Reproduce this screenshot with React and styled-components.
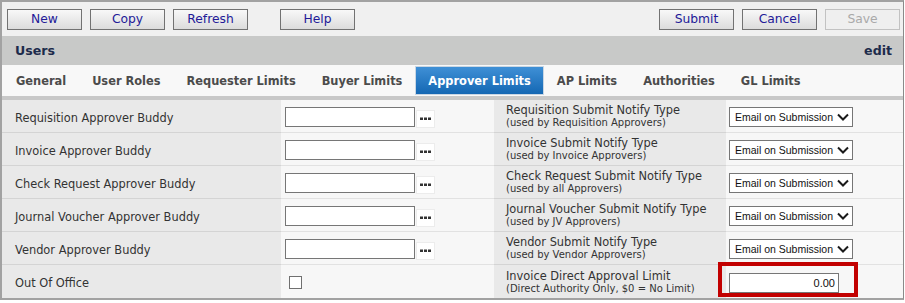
import styled, { createGlobalStyle } from "styled-components";

const GlobalStyle = createGlobalStyle`
  body {
    margin: 0;
    background: #ffffff;
    font-family: "DejaVu Sans", Verdana, sans-serif;
  }
`;

const Frame = styled.div`
  width: 904px;
  box-sizing: border-box;
  border: 2px solid #a2a2a2;
  border-right-width: 1px;
  border-right-color: #8a8a8a;
`;

const Toolbar = styled.div`
  height: 34px;
  box-sizing: border-box;
  padding: 7px 3px 0 5px;
  background: #f0f0f0;
  display: flex;
  align-items: flex-start;
`;

const ButtonGroup = styled.div`
  display: flex;
  gap: 8px;
  margin-left: ${(p) => p.$offset || "0"};
`;

const Spacer = styled.div`
  flex: 1;
`;

const ToolButton = styled.button`
  width: 75px;
  height: 21px;
  box-sizing: border-box;
  padding: 0;
  border: 1px solid ${(p) => (p.disabled ? "#c2c2c2" : "#727272")};
  background: ${(p) =>
    p.disabled ? "#efefef" : "linear-gradient(#f8f8f8, #dcdcdc)"};
  color: ${(p) => (p.disabled ? "#a9a9a9" : "#231a98")};
  font-family: "DejaVu Sans", Verdana, sans-serif;
  font-size: 12.3px;
  line-height: 19px;
  cursor: pointer;
`;

const Header = styled.div`
  height: 29px;
  box-sizing: border-box;
  padding: 0 11px 0 13px;
  background: #c8c9c8;
  display: flex;
  align-items: center;
  justify-content: space-between;
  color: #1c2b4b;
  font-weight: bold;
  font-size: 12.6px;
`;

const TabsRow = styled.div`
  height: 35px;
  box-sizing: border-box;
  padding-left: 1px;
  background: #f8f8f8;
  display: flex;
  align-items: flex-start;
  border-bottom: 4px solid #c8c8c8;
`;

const Tab = styled.div`
  height: 29px;
  margin-top: 1px;
  box-sizing: border-box;
  padding: 0 12px;
  display: flex;
  align-items: center;
  font-size: 11.4px;
  font-weight: bold;
  white-space: nowrap;
  border: 1px solid ${(p) => (p.$active ? "#c9d6e3" : "transparent")};
  color: ${(p) => (p.$active ? "#ffffff" : "#4b4b4b")};
  background: ${(p) =>
    p.$active ? "linear-gradient(#3f90d6, #1467b3)" : "transparent"};
`;

const Grid = styled.div`
  display: grid;
  grid-template-columns: 279px 213px 232px 1fr;
  grid-auto-rows: 33px;
`;

const Cell = styled.div`
  position: relative;
  box-sizing: border-box;
  display: flex;
  align-items: center;
  background: ${(p) => (p.$field ? "#f7f7f7" : "#e9e9e9")};
  border-bottom: ${(p) =>
    p.$last ? "none" : `1px solid ${p.$field ? "#e2e2e2" : "#d4d4d4"}`};
  padding-left: ${(p) => p.$pad || "0"};
  color: #333333;
`;

const Label = styled.span`
  font-size: 11.4px;
`;

const BuddyLabel = styled(Label)`
  margin-top: 3px;
`;

const LabelStack = styled.div`
  display: flex;
  flex-direction: column;
  line-height: 13px;
  margin-top: 1px;
`;

const Hint = styled.span`
  font-size: 10px;
  line-height: 12px;
`;

const TextInput = styled.input`
  height: 20px;
  box-sizing: border-box;
  margin: 2px 0 0;
  border: 1px solid #767676;
  background: #ffffff;
  padding: 0 3px;
  font-family: "Liberation Sans", Arial, sans-serif;
  font-size: 11px;
  color: #111111;
  text-align: ${(p) => p.$align || "left"};
  width: ${(p) => p.$width || "130px"};
`;

const LookupButton = styled.button`
  width: 19px;
  height: 18px;
  margin: 5px 0 0 1px;
  box-sizing: border-box;
  padding: 0;
  border: 1px solid #ececec;
  background: #ffffff;
  display: flex;
  align-items: center;
  justify-content: center;
  cursor: pointer;
`;

const SelectBox = styled.div`
  width: 124px;
  height: 20px;
  margin-top: 2px;
  box-sizing: border-box;
  border: 1px solid #767676;
  background: #ffffff;
  display: flex;
  align-items: center;
  justify-content: space-between;
  padding: 0 3px 0 5px;
  font-family: "Liberation Sans", Arial, sans-serif;
  font-size: 10.5px;
  color: #111111;
`;

const Checkbox = styled.input`
  appearance: none;
  width: 13px;
  height: 13px;
  margin: 2px 0 0 4px;
  border: 1px solid #707070;
  background: #ffffff;
`;

const Highlight = styled.div`
  position: absolute;
  left: -8px;
  top: -3px;
  width: 140px;
  height: 35px;
  box-sizing: border-box;
  border: 4px solid #c20000;
  pointer-events: none;
`;

const Dots = () => (
  <svg width="11" height="3" viewBox="0 0 11 3">
    <rect x="0" y="0.5" width="3" height="2.5" fill="#333" />
    <rect x="4" y="0.5" width="3" height="2.5" fill="#333" />
    <rect x="8" y="0.5" width="3" height="2.5" fill="#333" />
  </svg>
);

const Chevron = () => (
  <svg width="12" height="8" viewBox="0 0 12 8">
    <polyline
      points="1,1.5 6,6.5 11,1.5"
      fill="none"
      stroke="#1a1a1a"
      strokeWidth="2"
    />
  </svg>
);

const tabs = [
  "General",
  "User Roles",
  "Requester Limits",
  "Buyer Limits",
  "Approver Limits",
  "AP Limits",
  "Authorities",
  "GL Limits",
];

const rows = [
  {
    buddy: "Requisition Approver Buddy",
    notify: "Requisition Submit Notify Type",
    hint: "(used by Requisition Approvers)",
  },
  {
    buddy: "Invoice Approver Buddy",
    notify: "Invoice Submit Notify Type",
    hint: "(used by Invoice Approvers)",
  },
  {
    buddy: "Check Request Approver Buddy",
    notify: "Check Request Submit Notify Type",
    hint: "(used by all Approvers)",
  },
  {
    buddy: "Journal Voucher Approver Buddy",
    notify: "Journal Voucher Submit Notify Type",
    hint: "(used by JV Approvers)",
  },
  {
    buddy: "Vendor Approver Buddy",
    notify: "Vendor Submit Notify Type",
    hint: "(used by Vendor Approvers)",
  },
];

function App() {
  return (
    <>
      <GlobalStyle />
      <Frame>
        <Toolbar>
          <ButtonGroup>
            <ToolButton>New</ToolButton>
            <ToolButton>Copy</ToolButton>
            <ToolButton>Refresh</ToolButton>
          </ButtonGroup>
          <ButtonGroup $offset="32px">
            <ToolButton>Help</ToolButton>
          </ButtonGroup>
          <Spacer />
          <ButtonGroup>
            <ToolButton>Submit</ToolButton>
            <ToolButton>Cancel</ToolButton>
            <ToolButton disabled>Save</ToolButton>
          </ButtonGroup>
        </Toolbar>

        <Header>
          <span>Users</span>
          <span>edit</span>
        </Header>

        <TabsRow>
          {tabs.map((t) => (
            <Tab key={t} $active={t === "Approver Limits"}>
              {t}
            </Tab>
          ))}
        </TabsRow>

        <Grid>
          {rows.map((r) => [
            <Cell key={r.buddy + "-l"} $pad="13px">
              <BuddyLabel>{r.buddy}</BuddyLabel>
            </Cell>,
            <Cell key={r.buddy + "-f"} $field $pad="4px">
              <TextInput type="text" />
              <LookupButton>
                <Dots />
              </LookupButton>
            </Cell>,
            <Cell key={r.notify + "-l"} $pad="12px">
              <LabelStack>
                <Label>{r.notify}</Label>
                <Hint>{r.hint}</Hint>
              </LabelStack>
            </Cell>,
            <Cell key={r.notify + "-f"} $field $pad="3px">
              <SelectBox>
                <span>Email on Submission</span>
                <Chevron />
              </SelectBox>
            </Cell>,
          ])}
          <Cell $pad="13px" $last>
            <BuddyLabel>Out Of Office</BuddyLabel>
          </Cell>
          <Cell $field $last $pad="4px">
            <Checkbox type="checkbox" />
          </Cell>
          <Cell $pad="12px" $last>
            <LabelStack>
              <Label>Invoice Direct Approval Limit</Label>
              <Hint>(Direct Authority Only, $0 = No Limit)</Hint>
            </LabelStack>
          </Cell>
          <Cell $field $last $pad="3px">
            <TextInput type="text" defaultValue="0.00" $align="right" $width="110px" />
            <Highlight />
          </Cell>
        </Grid>
      </Frame>
    </>
  );
}

export default App;
